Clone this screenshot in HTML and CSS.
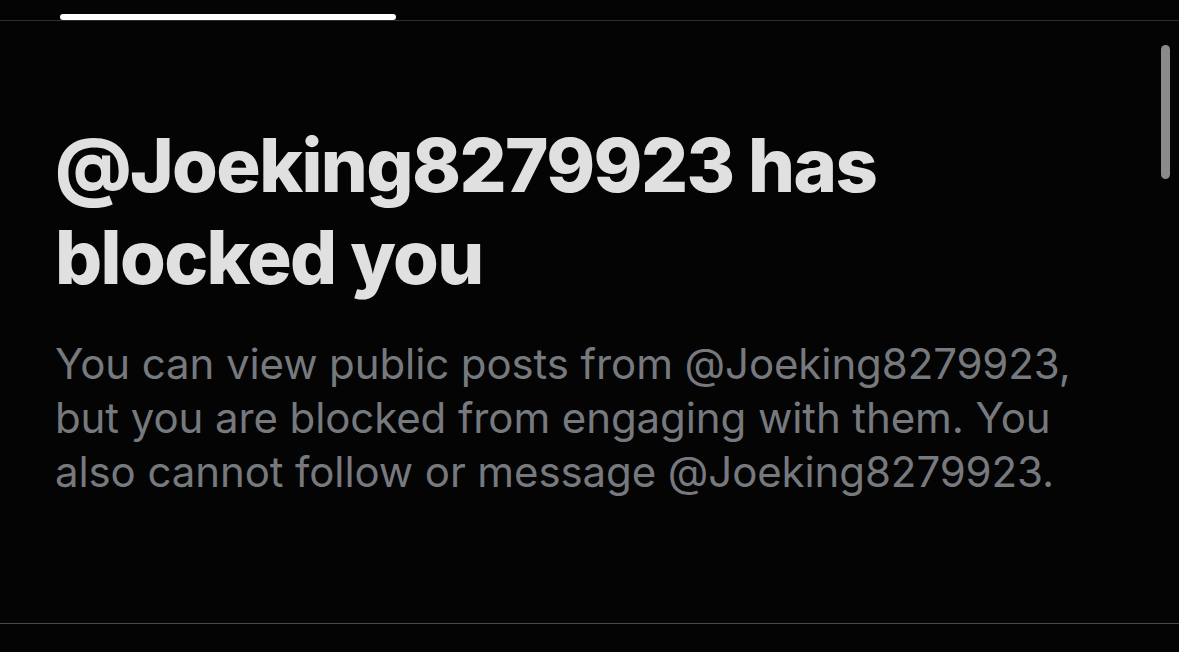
FILE: index.html
```html
<!DOCTYPE html>
<html>
<head>
<meta charset="utf-8">
<link rel="stylesheet" href="styles.css">
</head>
<body>
<div class="screen">
  <div class="topbar">
    <div class="indicator"></div>
  </div>
  <main class="content">
    <h1 class="title">@Joeking8279923 has blocked you</h1>
    <p class="desc">You can view public posts from @Joeking8279923, but you are blocked from engaging with them. You also cannot follow or message @Joeking8279923.</p>
  </main>
  <div class="scrollbar"></div>
</div>
</body>
</html>
```
FILE: styles.css
```css
html, body {
  margin: 0;
  padding: 0;
  background: #040404;
}
.screen {
  position: relative;
  width: 1179px;
  height: 652px;
  background: #040404;
  overflow: hidden;
  display: flex;
  flex-direction: column;
}
.topbar {
  height: 21px;
  border-bottom: 1px solid #2e2e2e;
  padding-left: 60px;
  padding-top: 14px;
  box-sizing: border-box;
}
.indicator {
  width: 336px;
  height: 6px;
  background: #ffffff;
  border-radius: 3px;
}
.content {
  flex: 1;
  padding: 98px 0 0 55px;
  border-bottom: 1px solid #4a4a4a;
  margin-bottom: 28px;
}
.title {
  margin: 0;
  font-family: "Inter", "Liberation Sans", sans-serif;
  font-weight: 800;
  font-size: 74px;
  line-height: 92px;
  color: #e0e0e1;
  letter-spacing: -1.6px;
  width: 900px;
}
.desc {
  margin: 34px 0 0 0;
  font-family: "Inter", "Liberation Sans", sans-serif;
  font-weight: 400;
  font-size: 42px;
  line-height: 54px;
  color: #76797d;
  letter-spacing: -0.1px;
  width: 1060px;
}
.scrollbar {
  position: absolute;
  left: 1161px;
  top: 45px;
  width: 9px;
  height: 134px;
  border-radius: 5px;
  background: #8a8a8a;
}
```
